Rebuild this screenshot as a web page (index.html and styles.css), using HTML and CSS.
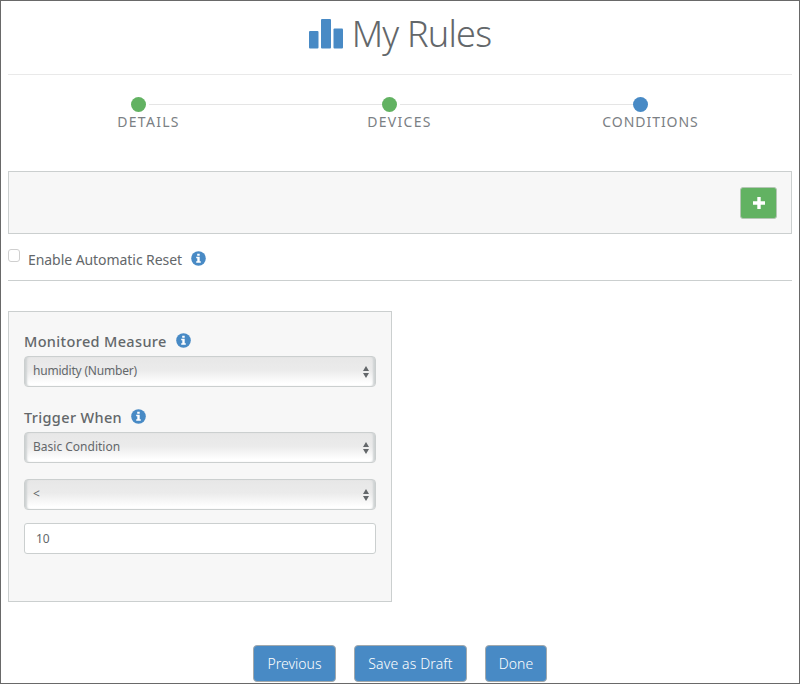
FILE: index.html
```html
<!DOCTYPE html>
<html lang="en">
<head>
<meta charset="utf-8">
<title>My Rules</title>
<link rel="stylesheet" href="styles.css">
</head>
<body>
<svg class="defs" width="0" height="0" aria-hidden="true">
  <symbol id="info" viewBox="0 0 15 15"><circle cx="7.5" cy="7.5" r="7.3" fill="#488ac5"/><path d="M6.2 2.7h2.5v2H6.2zM5.2 5.8h3.5v4.5h1.1v1.5H5.2v-1.5h1.1V7.3H5.2z" fill="#fff"/></symbol>
  <symbol id="arrows" viewBox="0 0 6 12"><path d="M3 0 6 5H0zM0 7h6l-3 5z" fill="#63676a"/></symbol>
</svg>
<div class="page">
  <header class="title">
    <svg class="chart" width="34" height="30" viewBox="0 0 34 30"><g fill="#488ac5"><rect y="12" width="9.5" height="17.5" rx="1"/><rect x="12" width="10" height="29.5" rx="1"/><rect x="24.5" y="9.5" width="9.5" height="20" rx="1"/></g></svg>
    <h1>My Rules</h1>
  </header>
  <ol class="steps">
    <li class="done"><i></i><span class="details">DETAILS</span></li>
    <li class="done"><i></i><span class="devices">DEVICES</span></li>
    <li><i></i><span>CONDITIONS</span></li>
  </ol>
  <section class="toolbar">
    <button class="add" aria-label="Add"><svg width="12" height="12" viewBox="0 0 12 12"><path d="M4.3 0h3.4v4.3H12v3.4H7.7V12H4.3V7.7H0V4.3h4.3z" fill="#fff"/></svg></button>
  </section>
  <div class="reset">
    <span class="check"></span><span class="reset-text">Enable Automatic Reset</span><svg class="info"><use href="#info"/></svg>
  </div>
  <section class="card">
    <div class="label"><span>Monitored Measure</span><svg class="info"><use href="#info"/></svg></div>
    <div class="select"><span class="humidity">humidity (Number)</span><svg class="arrows"><use href="#arrows"/></svg></div>
    <div class="label second"><span>Trigger When</span><svg class="info"><use href="#info"/></svg></div>
    <div class="select"><span>Basic Condition</span><svg class="arrows"><use href="#arrows"/></svg></div>
    <div class="select operator"><span>&lt;</span><svg class="arrows"><use href="#arrows"/></svg></div>
    <div class="field">10</div>
  </section>
  <footer class="actions">
    <button class="previous">Previous</button>
    <button class="draft">Save as Draft</button>
    <button class="finish">Done</button>
  </footer>
</div>
</body>
</html>
```
FILE: styles.css
```css
* { box-sizing: border-box; }
body { margin: 0; background: #fff; color: #63676a; font-family: "Noto Sans", "Open Sans", sans-serif; }
.defs { position: absolute; }
svg { display: block; flex: none; }
.page { width: 800px; height: 684px; border: 1px solid #696969; padding: 0 7px; overflow: hidden; }
.title { height: 74px; display: flex; justify-content: center; border-bottom: 1px solid #e9e9e9; }
.chart { margin: 18px 9px 0 0; }
h1 { margin: 9px 0 0; font-size: 36px; line-height: 48px; font-weight: 300; letter-spacing: -0.8px; white-space: nowrap; }
.steps { list-style: none; margin: 0 15px; padding: 22px 0 0; height: 96px; display: grid; grid-template-columns: repeat(3, 251px); }
.steps li { display: flex; flex-direction: column; align-items: center; position: relative; }
.steps i { width: 15px; height: 15px; border-radius: 50%; background: #488ac5; margin-left: -20px; }
.steps .done i { background: #62b262; }
.steps .done::after { content: ""; position: absolute; left: 126px; top: 7px; width: 241px; height: 1px; background: #e5e5e5; }
.steps span { font-size: 14px; line-height: 19px; letter-spacing: 0.95px; color: #7b8084; }
.steps .details { letter-spacing: 1.3px; }
.steps .devices { letter-spacing: 1.3px; }
.toolbar { height: 63px; border: 1px solid #cbcfcf; background: #f7f7f7; display: flex; align-items: center; justify-content: flex-end; padding-right: 14px; }
button { font-family: inherit; padding: 0; display: flex; align-items: center; justify-content: center; }
.add { width: 37px; height: 32px; border-radius: 3px; border: 1px solid #b5c6b5; background: #62b262; }
.reset { height: 47px; border-bottom: 1px solid #cbcfcf; display: flex; align-items: flex-start; }
.check { width: 12px; height: 13px; margin-top: 15px; border: 1px solid #cfcfcf; border-radius: 3px; }
.reset-text { margin: 16px 9px 0 8px; font-size: 14px; line-height: 20px; letter-spacing: -0.06px; white-space: nowrap; }
.info { width: 15px; height: 15px; }
.reset .info { margin-top: 17px; }
.card { width: 384px; height: 291px; margin-top: 30px; padding: 19px 15px 0; border: 1px solid #cbcfcf; background: #f7f7f7; }
.label { height: 25px; display: flex; gap: 9px; align-items: flex-start; font-size: 14.5px; line-height: 20px; font-weight: 500; letter-spacing: 0.35px; }
.label .info { margin-top: 2px; }
.second { margin-top: 20px; }
.select { height: 31px; padding: 0 6px 2px 8px; display: flex; align-items: center; justify-content: space-between; font-size: 12px; border: 1px solid #cbcfcf; border-radius: 4px; background: linear-gradient(#e7e7e7 0%, #ebebeb 45%, #fff 92%); box-shadow: inset 3px 0 2px -1px #ced2d3, inset -3px 0 2px -1px #ced2d3; }
.humidity { letter-spacing: -0.2px; }
.arrows { width: 6px; height: 12px; margin-top: 2px; }
.operator { margin-top: 16px; }
.field { height: 31px; margin-top: 13px; padding-left: 11px; border: 1px solid #cbcfcf; border-radius: 3px; background: #fff; font-size: 12px; line-height: 29px; }
.actions { display: flex; justify-content: center; gap: 18px; margin-top: 43px; }
.actions button { height: 37px; border: 1px solid #a2a9ad; border-radius: 4px; background: #488ac5; color: #fff; font-size: 14px; font-weight: 300; }
.previous { width: 83px; }
.draft { width: 113px; }
.actions .draft { letter-spacing: 0.15px; }
.finish { width: 62px; }
```
